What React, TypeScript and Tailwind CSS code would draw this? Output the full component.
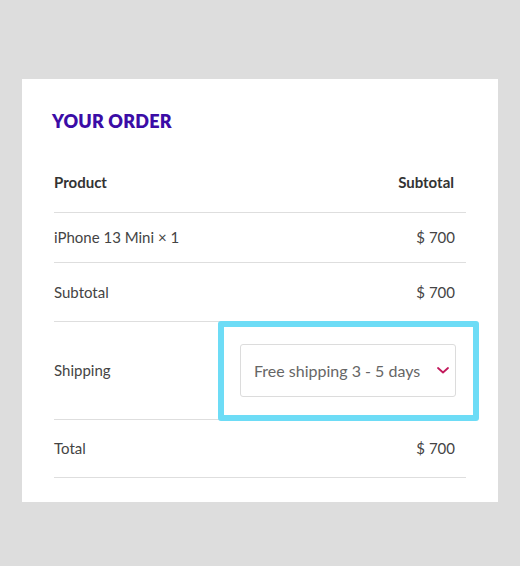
const rows = [
  { label: "iPhone 13 Mini × 1", value: "$ 700", h: "h-[50px]" },
  { label: "Subtotal", value: "$ 700", h: "h-[59px]" },
];

const Chevron = () => (
  <svg width="12" height="7" viewBox="0 0 12 7" fill="none">
    <polyline
      points="1,1 6,5.5 11,1"
      stroke="#c2185b"
      strokeWidth="1.8"
      strokeLinecap="round"
      strokeLinejoin="round"
    />
  </svg>
);

export default function App() {
  return (
    <div
      className="w-[520px] h-[566px] bg-[#dddddd] pt-[79px] pl-[22px]"
      style={{ fontFamily: "Lato, 'Open Sans', sans-serif" }}
    >
      <div className="w-[476px] h-[423px] bg-white px-8 pt-[30px]">
        <h2 className="ml-[-2px] text-[18px] leading-6 font-extrabold text-[#3b0ca6] tracking-[0.2px]">
          YOUR ORDER
        </h2>

        <div className="mt-[19px] text-[15px] text-[#444]">
          <div className="flex items-center justify-between h-[61px] border-b border-[#dedede] pr-3 font-bold text-[#333]">
            <span>Product</span>
            <span>Subtotal</span>
          </div>

          {rows.map((r) => (
            <div
              key={r.label}
              className={`flex items-center justify-between ${r.h} border-b border-[#dedede] pr-[11px]`}
            >
              <span>{r.label}</span>
              <span>{r.value}</span>
            </div>
          ))}

          <div className="relative flex items-center justify-between h-[98px] border-b border-[#dedede] pr-[10px]">
            <span>Shipping</span>
            <div className="flex items-center justify-between w-[216px] h-[53px] border border-[#dcdcdc] rounded-[3px] pl-[13px] pr-[6px] text-[16px] text-[#666]">
              <span>Free shipping 3 - 5 days</span>
              <Chevron />
            </div>
            <span className="absolute left-[164px] top-[-1px] w-[261px] h-[100px] border-[6px] border-[#6ddcf6] rounded-[3px]" />
          </div>

          <div className="flex items-center justify-between h-[58px] border-b border-[#dedede] pr-[11px]">
            <span>Total</span>
            <span>$ 700</span>
          </div>
        </div>
      </div>
    </div>
  );
}
